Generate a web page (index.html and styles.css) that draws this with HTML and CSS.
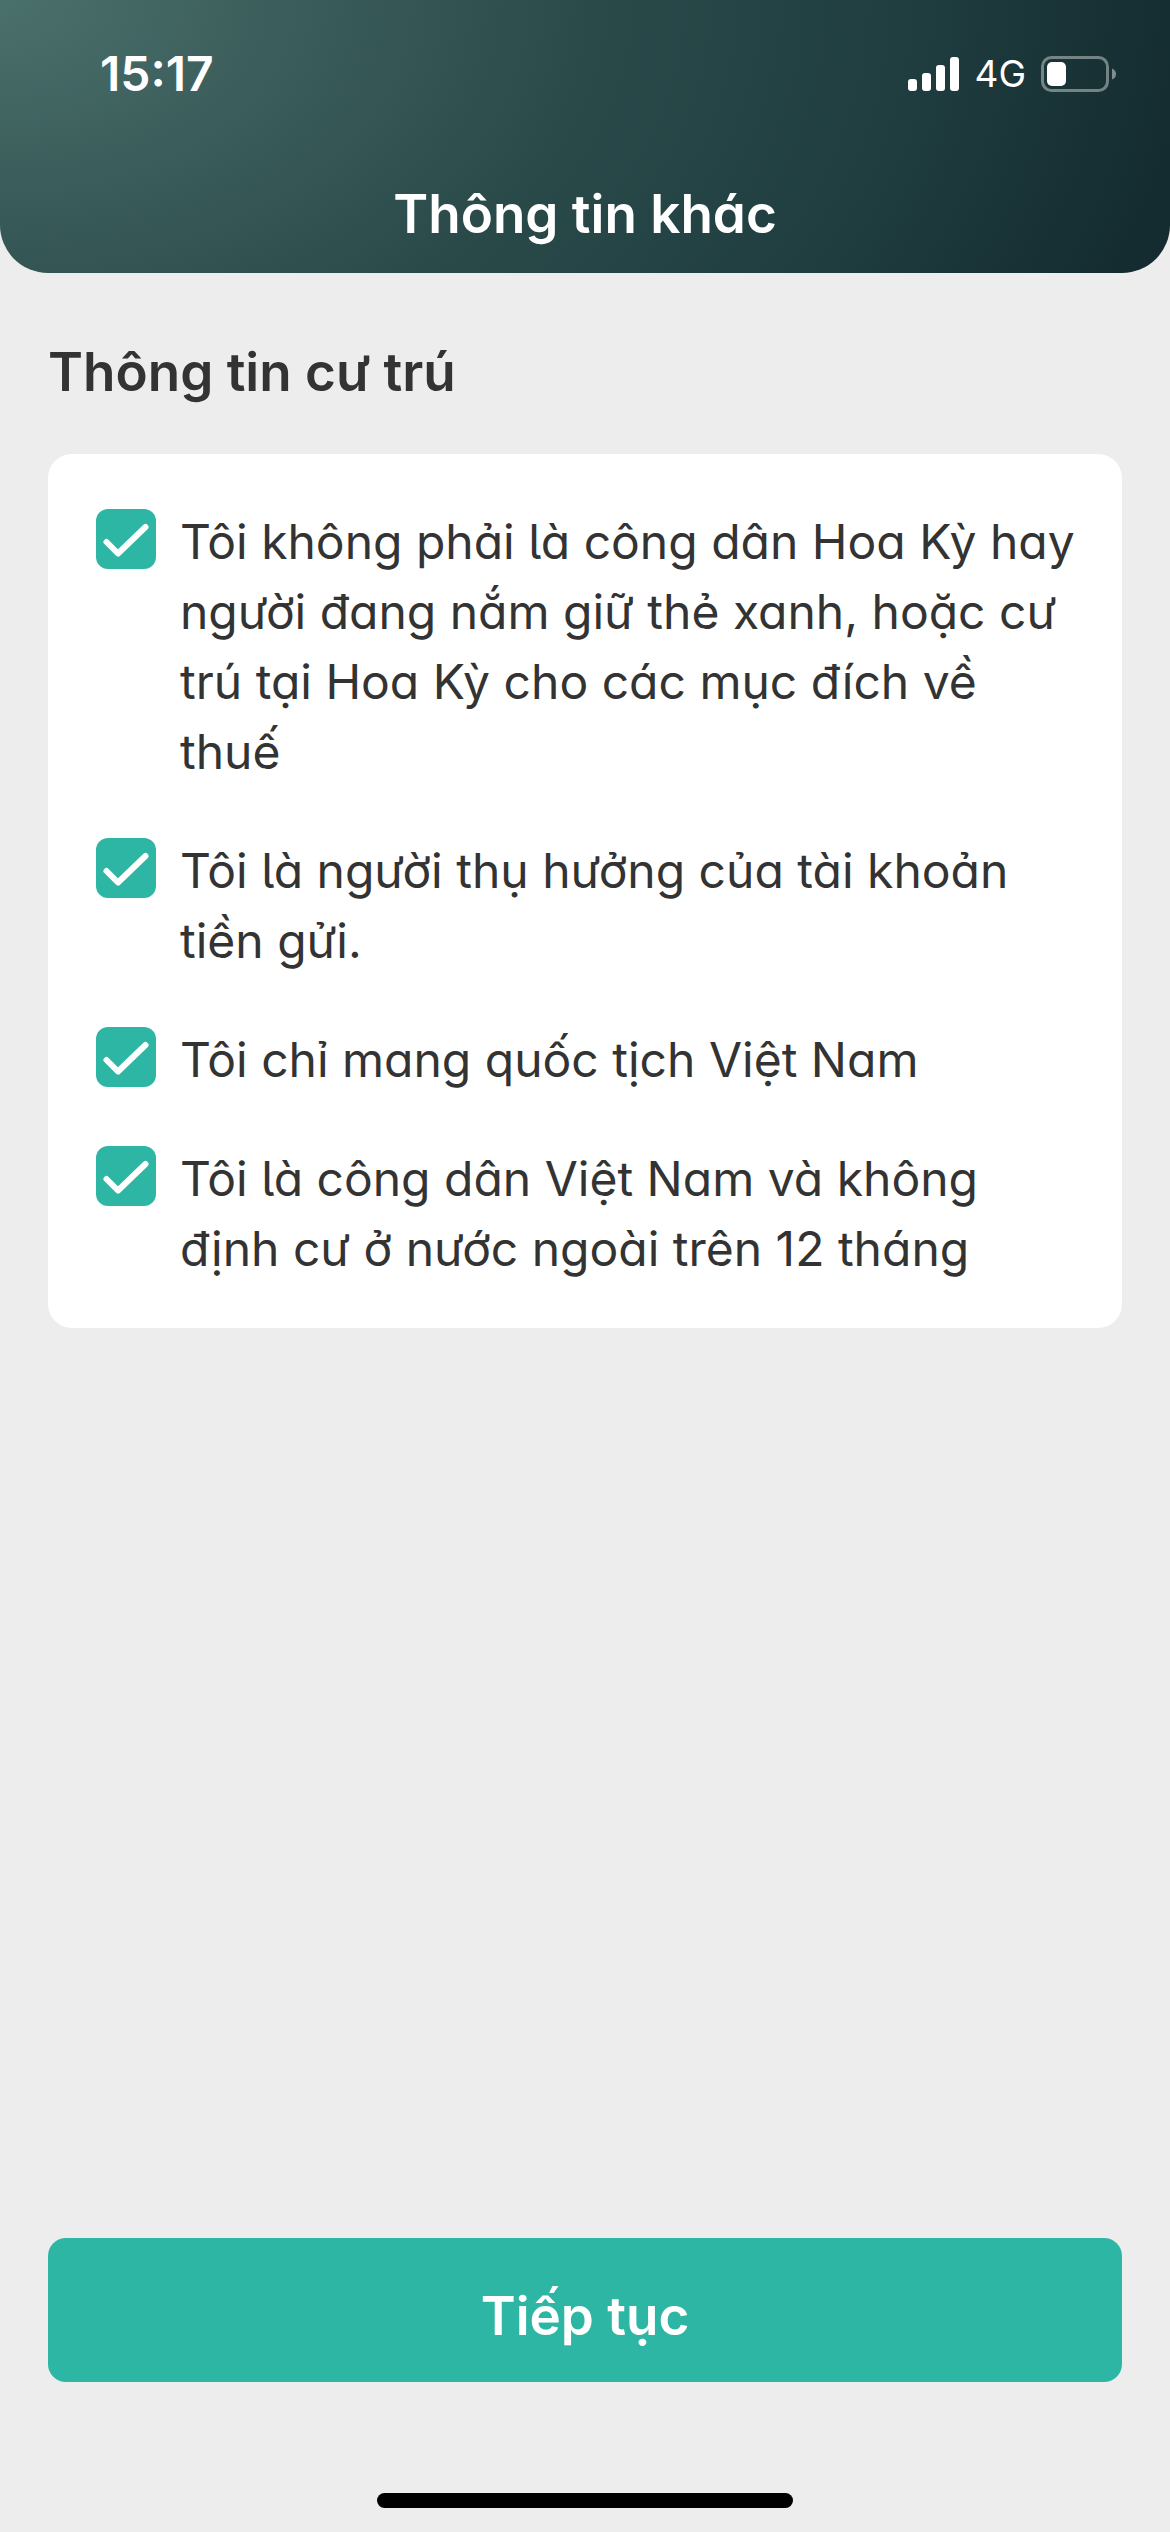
FILE: index.html
```html
<!DOCTYPE html>
<html lang="vi">
<head>
<meta charset="utf-8">
<meta name="viewport" content="width=device-width, initial-scale=1">
<title>Thông tin khác</title>
<link rel="stylesheet" href="styles.css">
</head>
<body>
<div class="screen">
  <header class="header">
    <div class="status">
      <span class="time">15:17</span>
      <div class="indicators">
        <svg class="signal" viewBox="0 0 51 34" aria-hidden="true">
          <rect x="0" y="22" width="9" height="12" rx="3"/>
          <rect x="14" y="16" width="9" height="18" rx="3"/>
          <rect x="28" y="8" width="9" height="26" rx="3"/>
          <rect x="42" y="0" width="9" height="34" rx="3"/>
        </svg>
        <span class="network">4G</span>
        <svg class="battery" viewBox="0 0 76 36" aria-hidden="true">
          <rect class="battery-case" x="1.5" y="1.5" width="65" height="33" rx="9"/>
          <rect x="6" y="6" width="19" height="24" rx="5"/>
          <path class="battery-cap" d="M71 12.500Q75 14 75 18T71 23.500Z"/>
        </svg>
      </div>
    </div>
    <h1 class="title">Thông tin khác</h1>
  </header>

  <main class="content">
    <h2 class="section-title">Thông tin cư trú</h2>
    <form class="card" id="residency">
      <label class="option">
        <input class="check" type="checkbox" checked>
        <span>Tôi không phải là công dân Hoa Kỳ hay người đang nắm giữ thẻ xanh, hoặc cư trú tại Hoa Kỳ cho các mục đích về thuế</span>
      </label>
      <label class="option">
        <input class="check" type="checkbox" checked>
        <span>Tôi là người thụ hưởng của tài khoản tiền gửi.</span>
      </label>
      <label class="option">
        <input class="check" type="checkbox" checked>
        <span>Tôi chỉ mang quốc tịch Việt Nam</span>
      </label>
      <label class="option">
        <input class="check" type="checkbox" checked>
        <span>Tôi là công dân Việt Nam và không định cư ở nước ngoài trên 12 tháng</span>
      </label>
    </form>
  </main>

  <footer class="footer">
    <button class="next" type="submit" form="residency">Tiếp tục</button>
    <div class="home-bar"></div>
  </footer>
</div>
</body>
</html>
```
FILE: styles.css
```css
* {
  box-sizing: border-box;
}

body {
  margin: 0;
  background: #ededed;
  color: #333;
  font-family: Inter, "Noto Sans", sans-serif;
}

.screen {
  display: flex;
  flex-direction: column;
  min-height: 100vh;
}

.header {
  padding: 44px 48px 24px;
  border-radius: 0 0 48px 48px;
  background: radial-gradient(ellipse 102% 282% at 0 0, #4b716c 0%, #3a5c5a 25%, #2a4a4a 50%, #203e40 75%, #142c2f 100%);
  color: #fff;
}

.status {
  display: flex;
  justify-content: space-between;
  align-items: center;
  height: 60px;
  padding-left: 52px;
  padding-right: 5px;
}

.time {
  font-size: 48px;
  font-weight: 600;
  line-height: 60px;
}

.indicators {
  display: flex;
  align-items: center;
  gap: 15px;
}

.signal,
.battery {
  display: block;
  fill: #fff;
}

.signal {
  width: 51px;
  height: 34px;
}

.network {
  font-size: 37px;
  line-height: 60px;
}

.battery {
  width: 76px;
  height: 36px;
}

.battery-case {
  fill: none;
  stroke: #fff;
  stroke-opacity: 0.4;
  stroke-width: 3;
}

.battery-cap {
  fill-opacity: 0.45;
}

.title,
.section-title,
.option,
.next {
  font-feature-settings: "cv11", "cv05";
}

.title {
  margin: 75px 0 0;
  font-size: 53px;
  font-weight: 600;
  line-height: 70px;
  text-align: center;
}

.content {
  flex: 1;
  padding: 64px 48px 48px;
}

.section-title {
  margin: 0 0 47px;
  font-size: 53px;
  font-weight: 600;
  line-height: 70px;
}

.card {
  display: flex;
  flex-direction: column;
  gap: 49px;
  padding: 53px 44px 44px 48px;
  border-radius: 24px;
  background: #fff;
}

.option {
  display: flex;
  align-items: flex-start;
  gap: 24px;
  font-size: 48px;
  line-height: 70px;
}

.check {
  flex: none;
  appearance: none;
  width: 60px;
  height: 60px;
  margin: 2px 0 0;
  border-radius: 12px;
  background: #fff;
  border: 3px solid #2eb6a5;
}

.check:checked {
  border: 0;
  background: #2eb6a5 url("data:image/svg+xml,%3Csvg xmlns='http://www.w3.org/2000/svg' viewBox='0 0 60 60'%3E%3Cpath d='M10.500 33 22 44.500 49.500 18' fill='none' stroke='white' stroke-width='6' stroke-linecap='round' stroke-linejoin='round'/%3E%3C/svg%3E") center / contain no-repeat;
}

.footer {
  display: flex;
  flex-direction: column;
  align-items: center;
  gap: 111px;
  padding: 0 48px 24px;
}

.next {
  width: 100%;
  padding: 43px 24px 31px;
  border: 0;
  border-radius: 18px;
  background: #2eb6a5;
  color: #fff;
  font-family: inherit;
  font-size: 53px;
  font-weight: 600;
  line-height: 70px;
}

.home-bar {
  width: 416px;
  max-width: 60%;
  height: 15px;
  border-radius: 8px;
  background: #000;
}
```
